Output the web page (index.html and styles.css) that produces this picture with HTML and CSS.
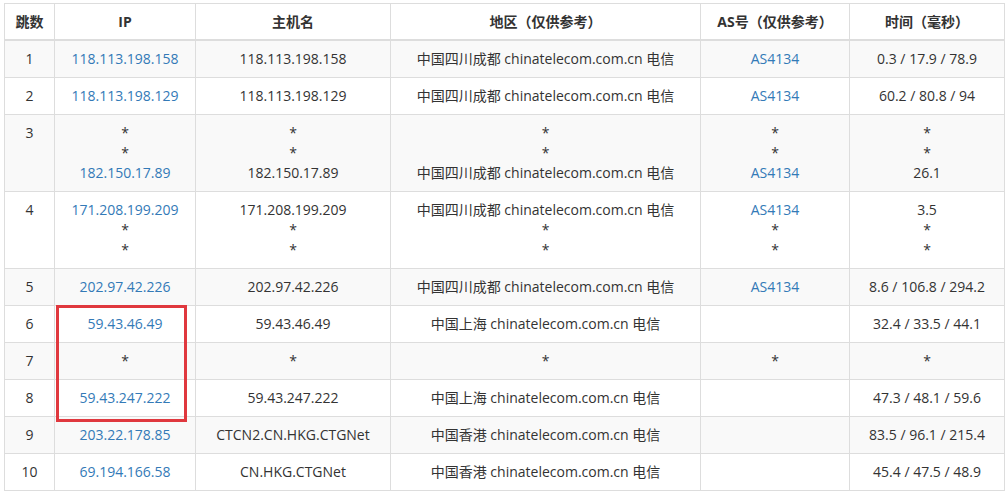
FILE: index.html
```html
<!DOCTYPE html>
<html lang="zh-CN">
<head>
<meta charset="utf-8">
<title>路由追踪</title>
<link rel="stylesheet" href="styles.css">
</head>
<body>
<div class="wrap">
  <table class="trace">
    <colgroup>
      <col class="c-hop"><col class="c-ip"><col class="c-host"><col class="c-geo"><col class="c-as"><col class="c-time">
    </colgroup>
    <thead>
      <tr><th>跳数</th><th>IP</th><th>主机名</th><th>地区（仅供参考）</th><th>AS号（仅供参考）</th><th>时间（毫秒）</th></tr>
    </thead>
    <tbody>
      <tr><td>1</td><td><a href="#">118.113.198.158</a></td><td>118.113.198.158</td><td>中国四川成都 chinatelecom.com.cn 电信</td><td><a href="#">AS4134</a></td><td>0.3 / 17.9 / 78.9</td></tr>
      <tr><td>2</td><td><a href="#">118.113.198.129</a></td><td>118.113.198.129</td><td>中国四川成都 chinatelecom.com.cn 电信</td><td><a href="#">AS4134</a></td><td>60.2 / 80.8 / 94</td></tr>
      <tr><td>3</td><td>*<br>*<br><a href="#">182.150.17.89</a></td><td>*<br>*<br>182.150.17.89</td><td>*<br>*<br>中国四川成都 chinatelecom.com.cn 电信</td><td>*<br>*<br><a href="#">AS4134</a></td><td>*<br>*<br>26.1</td></tr>
      <tr><td>4</td><td><a href="#">171.208.199.209</a><br>*<br>*</td><td>171.208.199.209<br>*<br>*</td><td>中国四川成都 chinatelecom.com.cn 电信<br>*<br>*</td><td><a href="#">AS4134</a><br>*<br>*</td><td>3.5<br>*<br>*</td></tr>
      <tr><td>5</td><td><a href="#">202.97.42.226</a></td><td>202.97.42.226</td><td>中国四川成都 chinatelecom.com.cn 电信</td><td><a href="#">AS4134</a></td><td>8.6 / 106.8 / 294.2</td></tr>
      <tr><td>6</td><td><a href="#">59.43.46.49</a></td><td>59.43.46.49</td><td>中国上海 chinatelecom.com.cn 电信</td><td></td><td>32.4 / 33.5 / 44.1</td></tr>
      <tr><td>7</td><td>*</td><td>*</td><td>*</td><td>*</td><td>*</td></tr>
      <tr><td>8</td><td><a href="#">59.43.247.222</a></td><td>59.43.247.222</td><td>中国上海 chinatelecom.com.cn 电信</td><td></td><td>47.3 / 48.1 / 59.6</td></tr>
      <tr><td>9</td><td><a href="#">203.22.178.85</a></td><td>CTCN2.CN.HKG.CTGNet</td><td>中国香港 chinatelecom.com.cn 电信</td><td></td><td>83.5 / 96.1 / 215.4</td></tr>
      <tr><td>10</td><td><a href="#">69.194.166.58</a></td><td>CN.HKG.CTGNet</td><td>中国香港 chinatelecom.com.cn 电信</td><td></td><td>45.4 / 47.5 / 48.9</td></tr>
    </tbody>
  </table>
  <div class="highlight"></div>
</div>
</body>
</html>
```

FILE: styles.css
```css
* { box-sizing: border-box; }
html, body { margin: 0; padding: 0; background: #fff; }
body {
  font-family: "Open Sans", "Noto Sans CJK SC", sans-serif;
  font-size: 14px;
  line-height: 20px;
  color: #333;
}
.wrap {
  position: relative;
  margin: 3px 0 0 4px;
  width: 1000px;
}
.trace {
  width: 1000px;
  border-collapse: collapse;
  border-spacing: 0;
  table-layout: fixed;
  border: 1px solid #ddd;
}
.c-hop { width: 50px; }
.c-ip { width: 141px; }
.c-host { width: 195px; }
.c-geo { width: 310px; }
.c-as { width: 149px; }
.c-time { width: 155px; }
.trace th,
.trace td {
  border: 1px solid #ddd;
  padding: 8px;
  text-align: center;
  vertical-align: top;
  white-space: nowrap;
}
.trace th {
  font-weight: bold;
  padding-bottom: 7px;
  border-bottom: 2px solid #ddd;
  vertical-align: bottom;
}
.trace tbody tr:nth-child(odd) { background: #f9f9f9; }
.trace a { color: #337ab7; text-decoration: none; }
.highlight {
  position: absolute;
  left: 52px;
  top: 302px;
  width: 131px;
  height: 117px;
  border: 3px solid #e0383e;
}
```
